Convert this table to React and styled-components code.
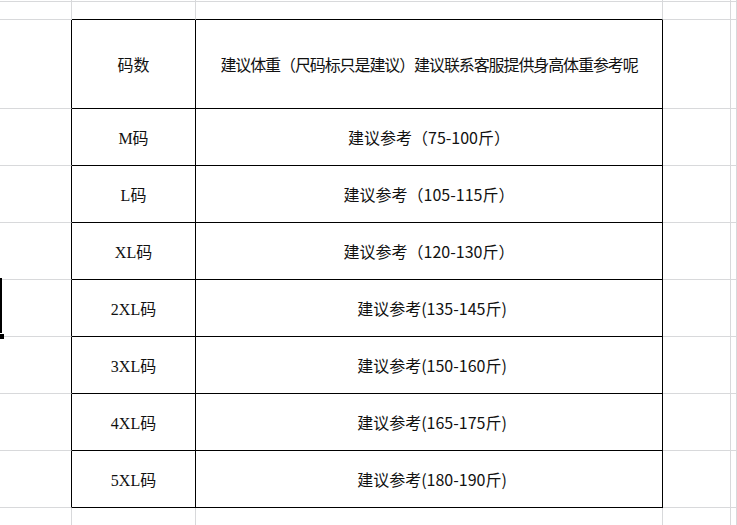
import React from "react";
import styled, { createGlobalStyle } from "styled-components";

const GRID = "#d8d9db";
const INK = "#000";

const Global = createGlobalStyle`
  html, body {
    margin: 0;
    padding: 0;
    background: #ffffff;
    overflow: hidden;
  }
  body {
    font-family: "Noto Sans CJK SC", "Noto Sans", sans-serif;
  }
`;

const Sheet = styled.div`
  display: grid;
  grid-template-columns: 72px 124px 467px 68px 1fr;
  grid-template-rows: 2px 18px 89px repeat(8, 57px);
  width: 737px;
  height: 525px;
  overflow: hidden;
  background: #ffffff;
`;

const Cell = styled.div`
  box-sizing: border-box;
  position: relative;
  min-width: 0;
  border-right: 1px solid ${(p) => (p.$r ? INK : GRID)};
  border-bottom: 1px solid ${(p) => (p.$b ? INK : GRID)};
  display: flex;
  align-items: center;
  justify-content: center;
  font-size: 16px;
  color: #111;
  white-space: nowrap;
`;

const SizeLabel = styled.span`
  font-family: "Liberation Serif", "Noto Sans CJK SC", serif;
  font-size: 16px;
`;

const Note = styled.span`
  font-family: "Noto Sans CJK SC", sans-serif;
  font-size: 16px;
  padding-left: ${(p) => (p.$shift ? "6px" : "0")};
`;

const HeaderNote = styled(Note)`
  letter-spacing: -1.1px;
`;

const SelectionEdge = styled.div`
  position: absolute;
  left: 0;
  top: -2px;
  width: 2px;
  height: 59px;
  background: ${INK};
`;

const FillHandle = styled.div`
  position: absolute;
  left: 0;
  bottom: -3px;
  width: 4px;
  height: 5px;
  background: ${INK};
  border-top: 1px solid #fff;
`;

const rows = [
  ["M码", "建议参考（75-100斤）"],
  ["L码", "建议参考（105-115斤）"],
  ["XL码", "建议参考（120-130斤）"],
  ["2XL码", "建议参考(135-145斤)"],
  ["3XL码", "建议参考(150-160斤)"],
  ["4XL码", "建议参考(165-175斤)"],
  ["5XL码", "建议参考(180-190斤)"],
];

function BlankRow({ inkBelow }) {
  return (
    <>
      <Cell />
      <Cell $b={inkBelow} />
      <Cell $b={inkBelow} />
      <Cell />
      <Cell />
    </>
  );
}

function TableRow({ size, children, selected }) {
  return (
    <>
      <Cell $r>
        {selected && (
          <>
            <SelectionEdge />
            <FillHandle />
          </>
        )}
      </Cell>
      <Cell $r $b>
        {size}
      </Cell>
      <Cell $r $b>
        {children}
      </Cell>
      <Cell />
      <Cell />
    </>
  );
}

export default function App() {
  return (
    <>
      <Global />
      <Sheet>
        <BlankRow />
        <BlankRow inkBelow />
        <TableRow size={<Note>码数</Note>}>
          <HeaderNote>建议体重（尺码标只是建议）建议联系客服提供身高体重参考呢</HeaderNote>
        </TableRow>
        {rows.map(([size, note], i) => (
          <TableRow
            key={size}
            size={<SizeLabel>{size}</SizeLabel>}
            selected={i === 3}
          >
            <Note $shift={i >= 3}>{note}</Note>
          </TableRow>
        ))}
        <BlankRow />
      </Sheet>
    </>
  );
}
